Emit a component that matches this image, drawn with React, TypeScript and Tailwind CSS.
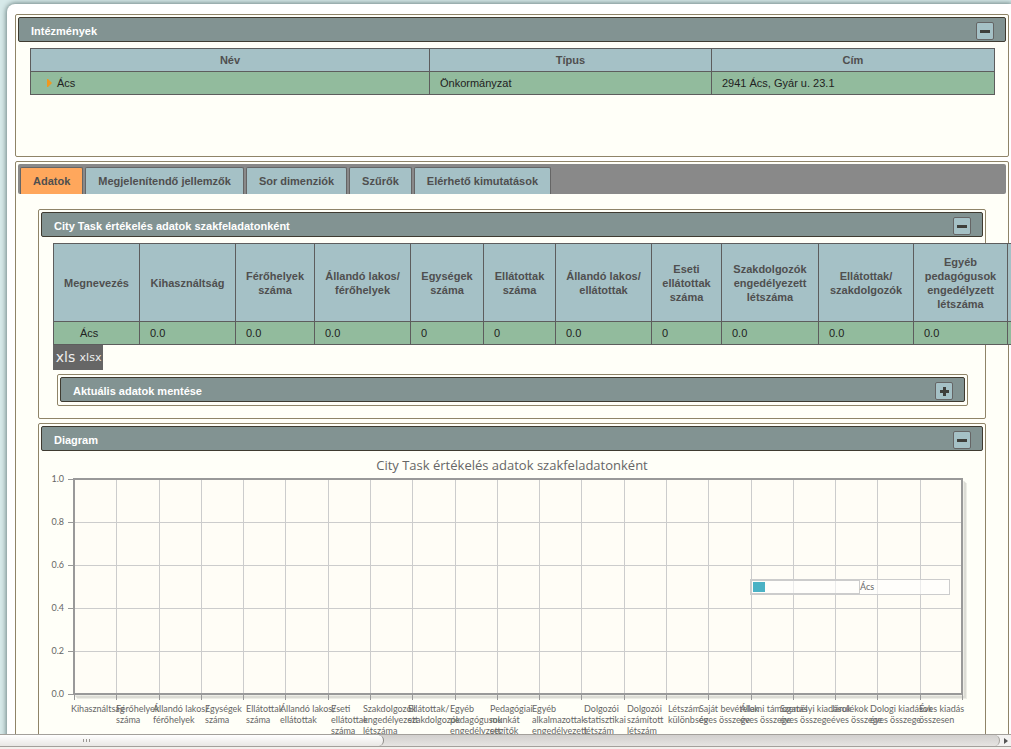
import { useState, type ReactNode } from "react";

type PanelProps = {
  title: string;
  closed?: boolean;
  className?: string;
  children?: ReactNode;
};

function Panel({ title, closed = false, className = "", children }: PanelProps) {
  const [collapsed, setCollapsed] = useState(closed);

  return (
    <section className={`rounded-xs border border-[#8f8468] bg-[#fffff8] p-[2px] ${className}`}>
      <header className="flex h-[25px] items-end justify-between rounded-xs border border-[#3f3b31] bg-[#829392] pr-[11px] pb-px pl-3">
        <h2 className="text-[11px] leading-[18px] font-bold text-white">{title}</h2>
        <button
          type="button"
          aria-label={title}
          aria-expanded={!collapsed}
          onClick={() => setCollapsed((c) => !c)}
          className="flex h-[18px] w-[18px] items-center justify-center rounded-xs border border-[#656565] bg-[#a5c1c6]"
        >
          <svg width="16" height="16" viewBox="0 0 16 16" fill="#3e3f3b" shapeRendering="crispEdges">
            {collapsed ? <path d="M4 7h3V4h3v3h3v3h-3v3H7v-3H4z" /> : <rect x="3" y="7" width="10" height="3" />}
          </svg>
        </button>
      </header>
      {!collapsed && children}
    </section>
  );
}

const tabs = ["Adatok", "Megjelenítendő jellemzők", "Sor dimenziók", "Szűrők", "Elérhető kimutatások"];

const columns = [
  { label: "Megnevezés", value: "Ács", width: 86 },
  { label: "Kihasználtság", value: "0.0", width: 96 },
  { label: "Férőhelyek száma", value: "0.0", width: 79 },
  { label: "Állandó lakos/ férőhelyek", value: "0.0", width: 96 },
  { label: "Egységek száma", value: "0", width: 73 },
  { label: "Ellátottak száma", value: "0", width: 72 },
  { label: "Állandó lakos/ ellátottak", value: "0.0", width: 96 },
  { label: "Eseti ellátottak száma", value: "0", width: 70 },
  { label: "Szakdolgozók engedélyezett létszáma", value: "0.0", width: 97 },
  { label: "Ellátottak/ szakdolgozók", value: "0.0", width: 95 },
  { label: "Egyéb pedagógusok engedélyzett létszáma", value: "0.0", width: 94 },
  { label: "", value: "", width: 90 },
];

const xLabels = [
  { x: 30, lines: ["Kihasználtság"] },
  { x: 75, lines: ["Férőhelyek", "száma"] },
  { x: 112, lines: ["Állandó lakos/", "férőhelyek"] },
  { x: 164, lines: ["Egységek", "száma"] },
  { x: 205, lines: ["Ellátottak", "száma"] },
  { x: 239, lines: ["Állandó lakos/", "ellátottak"] },
  { x: 290, lines: ["Eseti", "ellátottak", "száma"] },
  { x: 322, lines: ["Szakdolgozók", "engedélyezett", "létszáma"] },
  { x: 367, lines: ["Ellátottak/", "szakdolgozók"] },
  { x: 409, lines: ["Egyéb", "pedagógusok", "engedélyzett"] },
  { x: 449, lines: ["Pedagógiai", "munkát", "segítők"] },
  { x: 491, lines: ["Egyéb", "alkalmazottak", "engedélyezett"] },
  { x: 543, lines: ["Dolgozói", "statisztikai", "létszám"] },
  { x: 586, lines: ["Dolgozói", "számított", "létszám"] },
  { x: 627, lines: ["Létszám", "különbség"] },
  { x: 658, lines: ["Saját bevételek", "éves összege"] },
  { x: 699, lines: ["Állami támogatás", "éves összege"] },
  { x: 739, lines: ["Személyi kiadások", "éves összege"] },
  { x: 790, lines: ["Járulékok", "éves összege"] },
  { x: 829, lines: ["Dologi kiadások", "éves összege"] },
  { x: 878, lines: ["Éves kiadás", "összesen"] },
];

const yTicks = ["1.0", "0.8", "0.6", "0.4", "0.2", "0.0"];

const PLOT = { left: 33, right: 921, top: 28, bottom: 243 };

function Chart() {
  const stepX = (PLOT.right - PLOT.left) / xLabels.length;
  const stepY = (PLOT.bottom - PLOT.top) / (yTicks.length - 1);
  const gridX = Array.from({ length: xLabels.length + 1 }, (_, i) => Math.round(PLOT.left + i * stepX));

  return (
    <svg viewBox="0 0 942 300" className="block w-full font-['Lato','Open_Sans',sans-serif]" fill="#666666">
      <text x="471" y="19" fontSize="13" textAnchor="middle" className="font-['Open_Sans','Noto_Sans',sans-serif]">
        City Task értékelés adatok szakfeladatonként
      </text>

      {/* plot shadow */}
      <g fill="none" stroke="#000000" strokeOpacity="0.07">
        <path d="M34 245H923V30" strokeWidth="2" />
        <path d="M35 246H924V31" strokeWidth="2" />
        <path d="M36 247H925V32" strokeWidth="2" />
      </g>
      <rect x="33" y="28" width="888" height="215" fill="#fffdf6" />

      <g stroke="#cccccc" shapeRendering="crispEdges">
        {gridX.slice(1, -1).map((x) => (
          <line key={x} x1={x + 0.5} x2={x + 0.5} y1={PLOT.top} y2={PLOT.bottom} />
        ))}
        {yTicks.slice(1, -1).map((t, i) => (
          <line key={t} x1={PLOT.left} x2={PLOT.right} y1={PLOT.top + (i + 1) * stepY + 0.5} y2={PLOT.top + (i + 1) * stepY + 0.5} />
        ))}
      </g>
      <g stroke="#999999" shapeRendering="crispEdges">
        {gridX.map((x) => (
          <line key={x} x1={x + 0.5} x2={x + 0.5} y1={PLOT.bottom} y2={PLOT.bottom + 6} />
        ))}
        {yTicks.map((t, i) => (
          <line key={t} x1={PLOT.left - 6} x2={PLOT.left} y1={PLOT.top + i * stepY + 0.5} y2={PLOT.top + i * stepY + 0.5} />
        ))}
      </g>
      <rect x="33" y="28" width="888" height="215" fill="none" stroke="#999999" strokeWidth="2" />

      <g fontSize="9">
        {yTicks.map((t, i) => (
          <text key={t} x="23" y={PLOT.top + i * stepY + 3} textAnchor="end">
            {t}
          </text>
        ))}
        {xLabels.map((label) => (
          <text key={label.x} y="261">
            {label.lines.map((line, i) => (
              <tspan key={line} x={label.x} y={261 + i * 11}>
                {line}
              </tspan>
            ))}
          </text>
        ))}
      </g>

      {/* legend */}
      <rect x="709.5" y="128.5" width="199" height="15" fill="#ffffff" fillOpacity="0.6" stroke="#cccccc" />
      <rect x="710.5" y="129.5" width="108" height="13" fill="none" stroke="#cccccc" />
      <rect x="712" y="131" width="12" height="10" fill="#4bb2c5" />
      <text x="819" y="139" fontSize="9">
        Ács
      </text>
    </svg>
  );
}

export default function App() {
  const [activeTab, setActiveTab] = useState(tabs[0]);

  return (
    <div className="flex h-screen flex-col overflow-hidden bg-[#d6e9e9] font-['Liberation_Sans',Arial,sans-serif] text-[11px] text-[#222222]">
      <main className="min-h-0 flex-1 overflow-hidden pt-1 pl-[7px]">
        <div className="rounded-tl-lg bg-white pt-[10px] pr-[2px] pl-2 shadow-[0_0_5px_1px_#6f8585]">
          <Panel title="Intézmények" className="h-[143px]">
            <div className="pt-[6px] pr-[11px] pl-3">
              <table className="w-full table-fixed border-collapse leading-[14px]">
                <colgroup>
                  <col className="w-[399px]" />
                  <col className="w-[282px]" />
                  <col />
                </colgroup>
                <thead>
                  <tr className="h-[23px] bg-[#a5c1c6] text-[#4f4f4f]">
                    <th className="border border-[#5d5d5d]">Név</th>
                    <th className="border border-[#5d5d5d]">Típus</th>
                    <th className="border border-[#5d5d5d]">Cím</th>
                  </tr>
                </thead>
                <tbody>
                  <tr className="h-[23px] bg-[#92bb9d]">
                    <td className="border border-[#5d5d5d] pl-4">
                      <div className="flex items-center gap-[5px]">
                        <svg width="5" height="8" viewBox="0 0 5 8" fill="#f0981f">
                          <path d="M0 0h1l4 4-4 4H0z" />
                        </svg>
                        Ács
                      </div>
                    </td>
                    <td className="border border-[#5d5d5d] px-[10px]">Önkormányzat</td>
                    <td className="border border-[#5d5d5d] px-[10px]">2941 Ács, Gyár u. 23.1</td>
                  </tr>
                </tbody>
              </table>
            </div>
          </Panel>

          <div className="mt-1 rounded-xs border border-[#8f8468] bg-[#fffff8] p-[2px]">
            <div role="tablist" className="flex h-[30px] items-end gap-[2px] rounded-xs bg-[#898989] pl-[2px]">
              {tabs.map((tab) => (
                <button
                  key={tab}
                  type="button"
                  role="tab"
                  aria-selected={tab === activeTab}
                  onClick={() => setActiveTab(tab)}
                  className={`h-[27px] rounded-t-xs border border-b-0 border-[#656565] px-3 font-bold text-[#4f4f4f] ${
                    tab === activeTab ? "bg-[#ffa75c]" : "bg-[#a5c1c6]"
                  }`}
                >
                  {tab}
                </button>
              ))}
            </div>

            <div className="flex flex-col gap-1 pt-[15px] pr-5 pl-5">
              <Panel title="City Task értékelés adatok szakfeladatonként">
                <div className="pt-[6px] pr-[15px] pb-[10px] pl-3">
                  <table className="relative w-[1044px] table-fixed border-collapse leading-[14px]">
                    <colgroup>
                      {columns.map((c) => (
                        <col key={c.label} style={{ width: c.width }} />
                      ))}
                    </colgroup>
                    <thead>
                      <tr className="h-[78px] bg-[#a5c1c6] text-[#4f4f4f]">
                        {columns.map((c) => (
                          <th key={c.label} className="border border-[#5d5d5d] px-1">
                            {c.label}
                          </th>
                        ))}
                      </tr>
                    </thead>
                    <tbody>
                      <tr className="h-[23px] bg-[#92bb9d]">
                        {columns.map((c, i) => (
                          <td key={c.label} className={`border border-[#5d5d5d] ${i === 0 ? "pl-[26px]" : "pl-[10px]"}`}>
                            {c.value}
                          </td>
                        ))}
                      </tr>
                    </tbody>
                  </table>
                  <div className="flex font-['DejaVu_Sans',sans-serif] text-[#eeeeee]">
                    <button type="button" className="h-[25px] w-[25px] bg-[#666666] text-[14px] leading-[25px]">
                      xls
                    </button>
                    <button type="button" className="h-[25px] w-[25px] bg-[#666666] text-[11px] leading-[25px]">
                      xlsx
                    </button>
                  </div>
                  <Panel title="Aktuális adatok mentése" closed className="mt-1 ml-1 pb-[3px]" />
                </div>
              </Panel>

              <Panel title="Diagram">
                <Chart />
              </Panel>
            </div>
          </div>
        </div>
      </main>

      {/* horizontal scroll bar */}
      <div className="border-b-2 border-[#f3efec]">
        <div className="flex h-[13px] border-y border-[#a3a09b] bg-[#f3f2f1]">
          <div className="flex flex-1 rounded-r-full border-r border-[#a3a09b] bg-linear-to-b from-[#d2d0ce] to-[#e6e4e2]">
            <div className="flex w-5/13 items-center rounded-r-full border-r border-[#8a8783] bg-linear-to-b from-white to-[#e9e7e5] pl-[83px]">
              <svg width="8" height="3" viewBox="0 0 8 3" fill="#9a9793">
                <path d="M0 0h1v3H0zM3 0h1v3H3zM6 0h1v3H6z" />
              </svg>
            </div>
          </div>
          <button type="button" aria-label="Görgetés jobbra" className="flex w-[11px] items-center justify-end pr-[2px]">
            <svg width="5" height="6" viewBox="0 0 5 6" fill="#555555">
              <path d="M0 0l4 3-4 3z" />
            </svg>
          </button>
        </div>
      </div>
    </div>
  );
}
